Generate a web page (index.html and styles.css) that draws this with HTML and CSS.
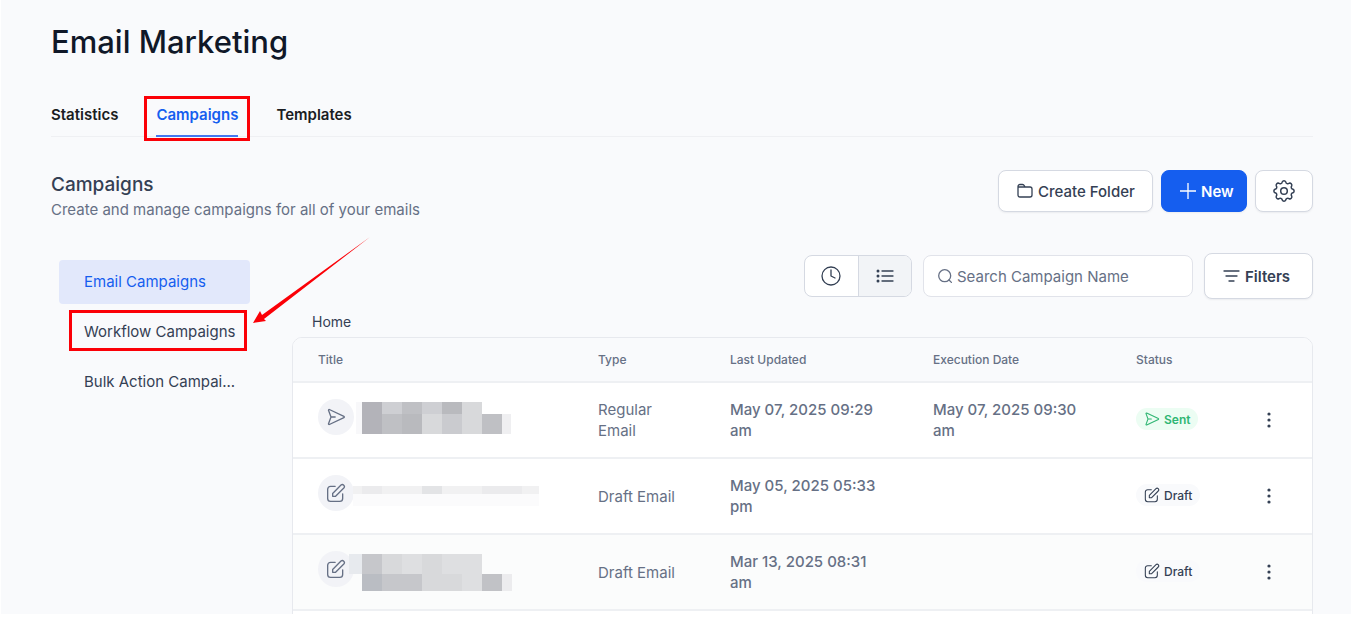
FILE: index.html
```
<!doctype html>
<html lang="en">
<head>
    <meta charset="UTF-8">
    <meta name="viewport" content="width=device-width, initial-scale=1.0">
    <link rel="stylesheet" href="styles.css">
    <title>Email Marketing</title>
</head>
<body>
<svg class="sprite" aria-hidden="true">
    <symbol id="send" viewBox="0 0 24 24">
        <path d="M6.5 12H11M6 12L3 4C2.8 3.3 3.4 2.7 4 3L21.5 11.3C22.1 11.6 22.1 12.4 21.5 12.7L4 21C3.4 21.3 2.8 20.7 3 20Z"/>
    </symbol>
    <symbol id="edit" viewBox="0 0 24 24">
        <path d="M11 4H5.5C3.5 4 2 5.5 2 7.5V18.5C2 20.5 3.5 22 5.500 22H16.5C18.5 22 20 20.5 20 18.5V13"/>
        <path d="M8 16V12.5L18 2.5C19 1.6 20.3 1.6 21.3 2.6C22.3 3.6 22.3 5 21.4 6L11.5 16Z"/>
    </symbol>
    <symbol id="dots" viewBox="0 0 4 18">
        <circle cx="2" cy="3" r="1.6"/><circle cx="2" cy="9" r="1.6"/><circle cx="2" cy="15" r="1.6"/>
    </symbol>
</svg>

<main class="page">
    <h1>Email Marketing</h1>

    <nav class="tabs">
        <a href="#">Statistics</a>
        <a href="#" class="active marked">Campaigns</a>
        <a href="#">Templates</a>
    </nav>

    <header class="heading">
        <div>
            <h2>Campaigns</h2>
            <p>Create and manage campaigns for all of your emails</p>
        </div>
        <div class="actions">
            <button class="btn btn-folder" type="button">
                <svg class="icon" width="16" height="16" viewBox="0 0 16 16"><path d="M1 12V3.5C1 2.4 1.7 1.5 3 1.5H5.5C6.5 1.5 7 2 7.5 3L8 4H13C14.3 4 15 4.7 15 6V12C15 13.3 14.3 14 13 14H3C1.7 14 1 13.3 1 12M1 4H8"/></svg>
                Create Folder
            </button>
            <button class="btn btn-primary" type="button">
                <svg class="icon" width="16" height="16" viewBox="0 0 16 16"><path d="M8 0V16M0 8H16"/></svg>
                New
            </button>
            <button class="btn btn-settings" type="button" aria-label="Settings">
                <svg class="icon gear" width="24" height="24" viewBox="0 0 24 24"><circle cx="12" cy="12" r="3.3"/><path d="M21 10.2A2 2 0 0 1 21 13.8A2 2 0 0 0 19.7 17.1A2 2 0 0 1 17.1 19.7A2 2 0 0 0 13.8 21A2 2 0 0 1 10.2 21A2 2 0 0 0 6.9 19.7A2 2 0 0 1 4.3 17.1A2 2 0 0 0 3 13.8A2 2 0 0 1 3 10.2A2 2 0 0 0 4.3 6.9A2 2 0 0 1 6.9 4.3A2 2 0 0 0 10.2 3A2 2 0 0 1 13.8 3A2 2 0 0 0 17.1 4.3A2 2 0 0 1 19.7 6.9A2 2 0 0 0 21 10.2Z"/></svg>
            </button>
        </div>
    </header>

    <div class="layout">
        <nav class="sidebar">
            <a href="#" class="active">Email Campaigns</a>
            <a href="#" class="marked">Workflow Campaigns</a>
            <a href="#">Bulk Action Campai...</a>
            <svg class="arrow" width="118" height="88" viewBox="0 0 118 88"><path d="M117 0L9 78L7 74L0 86L13 84L11 82Z"/></svg>
        </nav>

        <section class="content">
            <div class="toolbar">
                <div class="toggle">
                    <button type="button" aria-label="Recent">
                        <svg class="icon" width="20" height="20" viewBox="0 0 20 20"><circle cx="10" cy="10" r="9"/><path d="M10 4V10L14 12"/></svg>
                    </button>
                    <button type="button" class="selected" aria-label="List">
                        <svg class="icon" width="18" height="16" viewBox="0 0 18 16"><path d="M6 3H17M6 8H17M6 13H17"/><path class="bullets" d="M2 3H2M2 8H2M2 13H2"/></svg>
                    </button>
                </div>
                <label class="search">
                    <svg class="icon" width="14" height="14" viewBox="0 0 14 14"><circle cx="6.7" cy="6.7" r="6"/><path d="M11 11L13.4 13.4"/></svg>
                    <input type="text" placeholder="Search Campaign Name" aria-label="Search Campaign Name">
                </label>
                <button class="btn btn-filters" type="button">
                    <svg class="icon" width="17" height="14" viewBox="0 0 17 14"><path d="M1 2H16M3 7H14M6 12H11"/></svg>
                    Filters
                </button>
            </div>

            <a href="#" class="crumb">Home</a>

            <table>
                <colgroup>
                    <col>
                    <col class="col-type">
                    <col class="col-date">
                    <col class="col-date">
                    <col class="col-status">
                    <col class="col-menu">
                </colgroup>
                <thead>
                    <tr>
                        <th>Title</th>
                        <th>Type</th>
                        <th>Last Updated</th>
                        <th>Execution Date</th>
                        <th>Status</th>
                        <th></th>
                    </tr>
                </thead>
                <tbody>
                    <tr>
                        <td>
                            <div class="title">
                                <span class="avatar"><svg class="icon" width="20" height="20"><use href="#send"/></svg></span>
                                <svg class="redacted" width="190" height="40" viewBox="0 0 190 40">
                                    <path fill="#f8f8fa" d="M7 3h6v32h-6z"/>
                                    <path fill="#b3b3b9" d="M13 3h20v32h-20z"/>
                                    <path fill="#cecfd3" d="M33 3h20v12h-20zM73 3h20v12h-20z"/>
                                    <path fill="#bfc0c4" d="M53 3h20v12h-20zM33 15h20v20h-20zM133 15h20v20h-20z"/>
                                    <path fill="#b9babe" d="M93 3h20v12h-20zM53 15h20v20h-20z"/>
                                    <path fill="#d8d9db" d="M113 3h20v32h-20zM73 15h20v20h-20z"/>
                                    <path fill="#cacbcf" d="M93 15h20v20h-20z"/>
                                    <path fill="#efeff1" d="M153 15h9v20h-9z"/>
                                </svg>
                            </div>
                        </td>
                        <td>Regular Email</td>
                        <td class="date">May 07, 2025 09:29 am</td>
                        <td class="date">May 07, 2025 09:30 am</td>
                        <td><span class="badge sent"><svg class="icon" width="16" height="16"><use href="#send"/></svg>Sent</span></td>
                        <td><button class="menu" type="button" aria-label="More"><svg width="4" height="18"><use href="#dots"/></svg></button></td>
                    </tr>
                    <tr>
                        <td>
                            <div class="title">
                                <span class="avatar"><svg class="icon" width="20" height="20"><use href="#edit"/></svg></span>
                                <svg class="redacted" width="190" height="40" viewBox="0 0 190 40">
                                    <path fill="#f1f1f2" d="M4 11h186v8h-186z"/>
                                    <path fill="#ebebed" d="M13 11h20v8h-20zM133 11h40v8h-40z"/>
                                    <path fill="#e3e4e6" d="M73 11h20v8h-20z"/>
                                    <path fill="#fbfbfc" d="M4 19h186v12h-186z"/>
                                </svg>
                            </div>
                        </td>
                        <td>Draft Email</td>
                        <td class="date">May 05, 2025 05:33 pm</td>
                        <td></td>
                        <td><span class="badge"><svg class="icon" width="16" height="16"><use href="#edit"/></svg>Draft</span></td>
                        <td><button class="menu" type="button" aria-label="More"><svg width="4" height="18"><use href="#dots"/></svg></button></td>
                    </tr>
                    <tr class="hovered">
                        <td>
                            <div class="title">
                                <span class="avatar"><svg class="icon" width="20" height="20"><use href="#edit"/></svg></span>
                                <svg class="redacted" width="190" height="40" viewBox="0 0 190 40">
                                    <path fill="#e7eaee" d="M0 3h13v20h-13z"/>
                                    <path fill="#c6c7cb" d="M13 3h20v20h-20zM33 23h40v17h-40z"/>
                                    <path fill="#d8d9db" d="M33 3h20v20h-20zM73 3h20v37h-20zM93 23h20v17h-20z"/>
                                    <path fill="#dedfe1" d="M53 3h20v20h-20zM93 3h20v20h-20zM113 3h20v37h-20z"/>
                                    <path fill="#babdc3" d="M13 23h20v17h-20z"/>
                                    <path fill="#c1c2c6" d="M133 23h20v17h-20z"/>
                                    <path fill="#ececee" d="M153 23h10v17h-10z"/>
                                </svg>
                            </div>
                        </td>
                        <td>Draft Email</td>
                        <td class="date">Mar 13, 2025 08:31 am</td>
                        <td></td>
                        <td><span class="badge"><svg class="icon" width="16" height="16"><use href="#edit"/></svg>Draft</span></td>
                        <td><button class="menu" type="button" aria-label="More"><svg width="4" height="18"><use href="#dots"/></svg></button></td>
                    </tr>
                    <tr>
                        <td colspan="6"></td>
                    </tr>
                </tbody>
            </table>
        </section>
    </div>
</main>
</body>
</html>
```
FILE: styles.css
```
* {
    box-sizing: border-box;
}

body {
    margin: 0;
    background: #fff;
    color: #344054;
    font-family: Inter, sans-serif;
    font-size: 15px;
}

h1, h2, p {
    margin: 0;
}

a {
    color: inherit;
    text-decoration: none;
}

button, input {
    font: inherit;
    color: inherit;
}

button {
    padding: 0;
    border: 0;
    background: none;
    cursor: pointer;
}

svg {
    display: block;
    flex: none;
}

.sprite {
    position: absolute;
    width: 0;
    height: 0;
}

.icon {
    fill: none;
    stroke: currentColor;
    stroke-width: 1.3;
    stroke-linecap: round;
    stroke-linejoin: round;
}

.page {
    height: calc(100vh - 6px);
    margin: 0 4px 0 1px;
    padding: 22px 38px 0 50px;
    background: #f9fafc;
    overflow: hidden;
}

h1 {
    font-size: 31px;
    line-height: 40px;
    font-weight: 500;
    color: #101828;
}

/* tabs */
.tabs {
    display: flex;
    gap: 38px;
    height: 45px;
    margin-top: 30px;
    border-bottom: 1px solid #eff0f3;
    line-height: 46px;
    font-weight: 600;
    color: #1b1d22;
}

.tabs a {
    height: 45px;
}

.tabs .active {
    color: #155eef;
    border-bottom: 2px solid #4478f0;
}

.marked {
    position: relative;
}

.marked:after {
    content: "";
    position: absolute;
    border: 3px solid #fb0007;
}

.tabs .marked:after {
    top: 4px;
    right: -12px;
    bottom: -6px;
    left: -12px;
}

/* heading row */
.heading {
    display: flex;
    justify-content: space-between;
    align-items: flex-start;
    margin-top: 33px;
}

h2 {
    font-size: 19px;
    line-height: 30px;
    font-weight: 500;
}

.heading p {
    line-height: 20px;
    color: #667085;
}

.actions {
    display: flex;
    gap: 8px;
}

.btn {
    display: flex;
    align-items: center;
    gap: 5px;
    height: 42px;
    padding-left: 18px;
    border: 1px solid #d5d9e2;
    border-radius: 8px;
    background: #fff;
    box-shadow: 0 1px 2px rgba(16, 24, 40, .06);
    font-weight: 500;
}

.btn-folder {
    width: 155px;
}

.btn-primary {
    width: 86px;
    border-color: #155eef;
    background: #155eef;
    color: #fff;
    font-weight: 600;
}

.btn-settings {
    justify-content: center;
    width: 58px;
    padding: 0;
}

.gear {
    stroke-width: 1.5;
}

.btn-filters {
    width: 109px;
    height: 46px;
    font-weight: 600;
}

/* columns */
.layout {
    display: flex;
    gap: 42px;
    margin-top: 33px;
}

.sidebar {
    position: relative;
    display: flex;
    flex-direction: column;
    gap: 6px;
    flex: none;
    width: 199px;
    padding: 7px 0 0 8px;
}

.sidebar a {
    height: 44px;
    padding-left: 25px;
    border-radius: 4px;
    line-height: 44px;
}

.sidebar .active {
    background: #e2e8fb;
    color: #155eef;
}

.sidebar .marked:after {
    top: 0;
    right: 3px;
    bottom: 3px;
    left: 10px;
}

.arrow {
    position: absolute;
    top: -16px;
    left: 202px;
    fill: #fb0007;
}

.content {
    flex: 1;
    min-width: 0;
}

.toolbar {
    display: flex;
    align-items: center;
    justify-content: flex-end;
    gap: 11px;
}

.toggle {
    display: flex;
    width: 108px;
    height: 42px;
    border: 1px solid #d5d9e2;
    border-radius: 8px;
    background: #fff;
    overflow: hidden;
}

.toggle button {
    display: flex;
    flex: 1;
    align-items: center;
    justify-content: center;
}

.toggle .selected {
    border-left: 1px solid #d5d9e2;
    background: #f2f4f7;
}

.bullets {
    stroke-width: 3;
}

.search {
    display: flex;
    align-items: center;
    gap: 5px;
    width: 270px;
    height: 42px;
    padding: 0 14px;
    border: 1px solid #e1e3ea;
    border-radius: 8px;
    background: #fff;
    color: #667085;
}

.search input {
    flex: 1;
    min-width: 0;
    padding: 0;
    border: 0;
    outline: none;
    background: none;
}

.search input::placeholder {
    color: #667085;
    opacity: 1;
}

.crumb {
    display: block;
    margin: 12px 0 5px 20px;
    font-size: 14px;
    line-height: 21px;
}

/* table */
table {
    width: 100%;
    table-layout: fixed;
    border: 1px solid #e7e9ee;
    border-radius: 10px;
    border-spacing: 0;
    background: #fff;
    overflow: hidden;
    color: #667085;
}

.col-type {
    width: 132px;
}

.col-date {
    width: 203px;
}

.col-status {
    width: 127px;
}

.col-menu {
    width: 74px;
}

th {
    height: 45px;
    padding: 0 25px;
    border-bottom: 2px solid #eef0f3;
    background: #f9fafc;
    font-size: 12px;
    font-weight: 500;
    text-align: left;
}

td {
    height: 76px;
    padding: 0 25px;
    border-bottom: 2px solid #eef0f3;
    line-height: 21px;
}

.date {
    font-weight: 500;
}

.hovered td {
    background: #fbfcfc;
}

.title {
    display: flex;
    align-items: flex-start;
    height: 42px;
}

.avatar {
    display: flex;
    align-items: center;
    justify-content: center;
    flex: none;
    width: 36px;
    height: 36px;
    border-radius: 50%;
    background: #f2f3f7;
}

.avatar .icon,
.badge .icon {
    stroke-width: 1.6;
}

.redacted {
    margin-left: -5px;
}

.badge {
    display: inline-flex;
    align-items: center;
    gap: 4px;
    height: 22px;
    padding: 0 8px;
    border-radius: 11px;
    background: #f9fafc;
    color: #344054;
    font-size: 12px;
    font-weight: 500;
}

.badge.sent {
    background: #ecfdf3;
    color: #2fb673;
    font-weight: 600;
}

.menu {
    display: flex;
    align-items: center;
    justify-content: center;
    width: 12px;
    height: 24px;
    fill: #344054;
}
```
